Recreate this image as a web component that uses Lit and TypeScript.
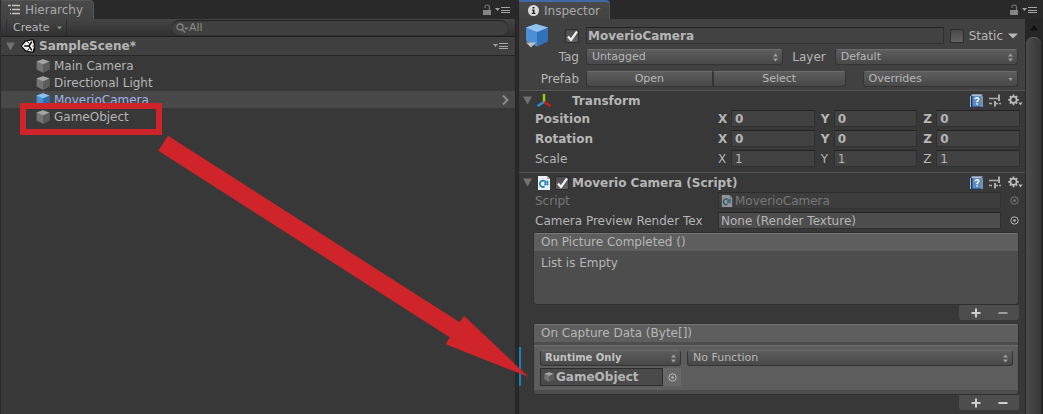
import { LitElement, html, svg, css, nothing } from "lit";
import { customElement, property } from "lit/decorators.js";

const base = css`
  * { box-sizing: border-box; }
  button, input, select {
    font: inherit; color: inherit; margin: 0; padding: 0; border: 0;
    background: none; border-radius: 0; appearance: none; outline: none; min-width: 0;
  }
  button, a { text-align: left; white-space: nowrap; }
  h2, h3, ul, p { margin: 0; padding: 0; font-size: inherit; font-weight: inherit; list-style: none; }
  svg { display: block; flex: none; }
  .tabs { display: flex; align-items: center; height: 19px; background: #292929; padding-right: 4px; }
  .tab {
    display: flex; align-items: center; gap: 4px; height: 19px; padding: 0 10px 0 7px;
    background: linear-gradient(#4a4a4a, #424242); border-right: 1px solid #555;
    border-top: 1px solid #555; border-top-right-radius: 4px; color: #a9a9a9;
  }
  .spacer { flex: 1; }
  .lock, .menu { display: flex; align-items: center; }
  .lock { margin-right: 3px; }
`;

const lockIcon = svg`<svg width="10" height="12" viewBox="0 0 10 12"><path d="M1 6h8v5H1z" fill="#858585"/><path d="M3 4V3.2a2 2 0 0 1 4.4 0V6" fill="none" stroke="#757575" stroke-width="1.2"/></svg>`;
const menuIcon = svg`<svg width="16" height="8" viewBox="0 0 16 8"><path d="M0 2h5L2.500 5z" fill="#a0a0a0"/><path d="M6 1.500h9M6 4.500h9M6 6.500h9" stroke="#a6a6a6" stroke-width="1.200"/></svg>`;
const foldIcon = svg`<svg width="9" height="9" viewBox="0 0 9 9"><path d="M0 0.500h9L4.500 8.500z" fill="#717171"/></svg>`;

const cube = (size: number, blue = false) => {
  const c = blue ? ["#8cc0ec", "#4b8fd0", "#2f6cae"] : ["#a4a4a4", "#747474", "#5c5c5c"];
  return svg`<svg width=${size} height=${size} viewBox="0 0 14 14">
    <path d="M7 0.300 13.400 2.600V10.400L7 13.700 0.600 10.400V2.600z" fill=${c[1]}/>
    <path d="M7 5.200 13.400 2.600V10.400L7 13.700z" fill=${c[2]}/>
    <path d="M7 0.300 13.400 2.600 7 5.200 0.600 2.600z" fill=${c[0]}/></svg>`;
};
const scriptIcon = (size: number) => svg`<svg width=${size} height=${size} viewBox="0 0 14 14">
  <path d="M1 0h9l3 3v11H1z" fill="#e9eef0"/><path d="M10 0v3h3z" fill="#a8b4ba"/>
  <path d="M7.600 5A3.200 3.200 0 1 0 7.600 10.600" fill="none" stroke="#1b7eae" stroke-width="1.700"/>
  <path d="M8.300 4.500v5M10.300 4.500v5M7 6h4.600M7 8.200h4.600" stroke="#1b7eae" stroke-width="1"/></svg>`;
const pickIcon = svg`<svg width="9" height="9" viewBox="0 0 9 9"><circle cx="4.500" cy="4.500" r="3.700" fill="none" stroke="currentColor"/><circle cx="4.500" cy="4.500" r="1.300" fill="currentColor"/></svg>`;

@customElement("hierarchy-panel")
export class HierarchyPanel extends LitElement {
  static styles = [base, css`
    :host { display: flex; flex-direction: column; background: #383838; border-right: 1px solid #232323; min-width: 0; }
    .toolbar {
      display: flex; align-items: center; height: 18px; padding-right: 7px;
      background: linear-gradient(#454545, #303030); border-bottom: 1px solid #202020;
    }
    .create {
      display: flex; align-items: center; gap: 7px; height: 17px; margin-left: 5px; padding: 0 3px 0 6px;
      border: solid #2c2c2c; border-width: 0 1px; font-size: 11px;
    }
    .search {
      display: flex; align-items: center; flex: 1; max-width: 336px; height: 15px; margin-left: auto;
      padding-left: 4px; border-radius: 8px; background: #404040; border-top: 1px solid #202020; color: #8b8b8b;
    }
    .search input { flex: 1; font-size: 11px; height: 13px; }
    .search input::placeholder { color: #8b8b8b; opacity: 1; }
    .tab { padding-left: 6px; }
    .scene {
      display: flex; align-items: center; height: 19px; padding: 0 6px 0 5px;
      background: #404040; border-bottom: 1px solid #262626; font-weight: bold;
    }
    .scene .name { margin-left: 4px; flex: 1; }
    .scene .logo { margin-left: 6px; }
    .items { padding-top: 1px; }
    .item { display: flex; align-items: center; gap: 4px; width: 100%; height: 17px; padding: 0 6px 0 35px; }
    .item span { flex: 1; }
    .on { background: #484848; color: #9fb3ea; }
  `];

  private items = ["Main Camera", "Directional Light", "MoverioCamera", "GameObject"];

  render() {
    return html`
      <div class="tabs">
        <button class="tab">
          <svg width="14" height="12" viewBox="0 0 14 12"><path d="M1 1.500h3M5 1.500h8M5 5.500h8M5 9.500h8M3 5.500h1M3 9.500h1" stroke="#c4c4c4" stroke-width="1.400"/></svg>
          Hierarchy
        </button>
        <span class="spacer"></span>
        <button class="lock" aria-label="Lock">${lockIcon}</button>
        <button class="menu" aria-label="Panel menu">${menuIcon}</button>
      </div>
      <div class="toolbar">
        <button class="create">Create
          <svg width="6" height="4" viewBox="0 0 6 4"><path d="M0 0.500h5L2.500 3.500z" fill="#909090"/></svg>
        </button>
        <label class="search">
          <svg width="13" height="11" viewBox="0 0 13 11"><circle cx="4" cy="4" r="3" fill="none" stroke="#858585" stroke-width="1.300"/><path d="M6 6l3 3.500" stroke="#858585" stroke-width="1.400"/><path d="M8 4.500h4.500L10.200 7z" fill="#858585"/></svg>
          <input type="text" placeholder="All" aria-label="Search hierarchy">
        </label>
      </div>
      <h2 class="scene">
        ${foldIcon}
        <svg class="logo" width="14" height="14" viewBox="0 0 14 14"><path d="M0 7 4 1.500 12 0 14 2V12L12 14 4 12.500z" fill="#0c0c0c"/><path d="M1 7 4.800 2.800 11.500 1.200 13.200 7 11.500 12.800 4.800 11.200z" fill="#f4f4f4"/><path d="M3.200 7H8M8 7 10.800 2.600M8 7l2.800 4.400" stroke="#0c0c0c" stroke-width="1.500"/><path d="M6.500 2.500 8 4.500M6.500 11.500 8 9.500M13.500 7H11.500" stroke="#0c0c0c" stroke-width="1"/></svg>
        <span class="name">SampleScene*</span>
        <button class="menu" aria-label="Scene menu">${menuIcon}</button>
      </h2>
      <ul class="items">
        ${this.items.map((name) => {
          const on = name === "MoverioCamera";
          return html`<li><button class="item ${on ? "on" : ""}">${cube(14, on)}<span>${name}</span>
            ${on ? html`<svg width="7" height="10" viewBox="0 0 7 10"><path d="M1 0.500 5.500 5 1 9.500" fill="none" stroke="#909090" stroke-width="1.800"/></svg>` : nothing}
          </button></li>`;
        })}
      </ul>`;
  }
}

@customElement("drop-down")
export class DropDown extends LitElement {
  @property() value = "";
  @property() label = "";
  @property({ type: Boolean }) single = false;
  @property({ type: Boolean }) strong = false;
  static styles = [base, css`
    :host { display: block; position: relative; min-width: 0; }
    select {
      display: block; width: 100%; height: 16px; padding: 0 14px 0 5px; font-size: 11px; line-height: 14px;
      color: #b8b8b8; border: 1px solid #343434; border-top-color: #6c6c6c; border-radius: 3px;
      background: linear-gradient(#5d5d5d, #484848);
    }
    .strong { font-weight: bold; font-size: 10px; color: #c4c4c4; padding-left: 4px; }
    .mark { position: absolute; right: 5px; top: 4px; pointer-events: none; }
  `];
  render() {
    return html`
      <select class=${this.strong ? "strong" : ""} aria-label=${this.label}><option>${this.value}</option></select>
      <svg class="mark" width="5" height="9" viewBox="0 0 5 9">
        ${this.single ? svg`<path d="M0.500 3h4L2.500 6z" fill="#a0a0a0"/>` : svg`<path d="M0 3.500h5L2.500 0.500zM0 5.500h5L2.500 8.500z" fill="#a0a0a0"/>`}
      </svg>`;
  }
}

@customElement("event-list")
export class EventList extends LitElement {
  @property() heading = "";
  @property({ type: Boolean }) filled = false;
  static styles = [base, css`
    :host { display: block; }
    .box { background: #4d4d4d; border: 1px solid #303030; border-radius: 3px; overflow: hidden; }
    .head { height: 18px; line-height: 17px; padding-left: 7px; background: #5e5e5e; border-top: 1px solid #747474; }
    .empty { height: 53px; padding: 4px 7px; line-height: 16px; }
    .entry {
      display: grid; grid-template-columns: 141px minmax(0, 1fr); gap: 2px 6px; margin: 3px 0 4px;
      height: 45px; padding: 4px 5px 0 6px; background: #5d5d5d; border-top: 1px solid #6c6c6c; align-content: start;
    }
    .object { display: flex; height: 18px; background: #686868; }
    .value {
      display: flex; align-items: center; gap: 2px; flex: 1; padding-left: 3px; font-weight: bold;
      background: #4a4a4a; border: 1px solid #2d2d2d;
    }
    .pick { display: grid; place-items: center; width: 18px; }
    .foot {
      display: flex; align-items: center; justify-content: space-around; width: 60px; height: 15px; margin-left: auto;
      padding: 0 3px; background: #4d4d4d; border-radius: 0 0 3px 3px;
    }
    .dim { opacity: 0.6; }
  `];
  render() {
    return html`
      <div class="box">
        <h3 class="head">${this.heading}</h3>
        ${this.filled
          ? html`<div class="entry">
              <drop-down strong value="Runtime Only" label="Call state"></drop-down>
              <drop-down value="No Function" label="Function"></drop-down>
              <div class="object"><button class="value">${cube(10)}GameObject</button>
                <button class="pick" aria-label="Select object">${pickIcon}</button></div>
            </div>`
          : html`<p class="empty">List is Empty</p>`}
      </div>
      <div class="foot">
        <button aria-label="Add"><svg width="10" height="10" viewBox="0 0 10 10"><path d="M5 0.500v9M0.500 5h9" stroke="#d0d0d0" stroke-width="2"/></svg></button>
        <button class=${this.filled ? "" : "dim"} aria-label="Remove"><svg width="10" height="10" viewBox="0 0 10 10"><path d="M0.500 5h9" stroke="#d0d0d0" stroke-width="2"/></svg></button>
      </div>`;
  }
}

@customElement("inspector-panel")
export class InspectorPanel extends LitElement {
  static styles = [base, css`
    :host { display: flex; flex-direction: column; background: #383838; border-left: 1px solid #232323; min-width: 0; }
    .tab { padding: 0 9px; border-top: 2px solid #4169a8; gap: 5px; }
    .tabs { padding-right: 5px; }
    .body { display: flex; flex: 1; }
    .content { flex: 1; min-width: 0; }
    .scroll { display: flex; flex-direction: column; width: 18px; padding: 0 2px 0 1px; background: #262626; }
    .up { display: grid; place-items: center; height: 18px; }
    .thumb { flex: 1; border-radius: 7px 7px 0 0; background: linear-gradient(90deg, #4c4c4c, #363636); border-top: 1px solid #606060; }
    .object { display: grid; grid-template-columns: 54px minmax(0, 1fr); column-gap: 7px; padding: 8px 7px 4px 6px; background: #414141; height: 71px; }
    .who { display: flex; justify-content: space-between; align-items: center; }
    .fields, .caption { display: grid; grid-template-rows: 17px 16px 17px; row-gap: 5px; align-content: start; min-width: 0; }
    .caption { align-items: center; text-align: right; }
    .line { display: flex; align-items: center; min-width: 0; }
    .text { height: 17px; padding: 0 3px; background: #424242; border: 1px solid #303030; border-top-color: #222; width: 100%; }
    .title { font-weight: bold; flex: 1; width: 0; padding: 0 1px; }
    .tick {
      width: 14px; height: 14px; border: 1px solid #2c2c2c; border-radius: 2px; flex: none;
      background: linear-gradient(#4a4a4a, #626262);
    }
    .tick:checked {
      background: url("data:image/svg+xml,%3Csvg xmlns='http://www.w3.org/2000/svg' viewBox='0 0 12 12'%3E%3Cpath d='M2 6.500l3 3.500L11 1.500' fill='none' stroke='%23f2f2f2' stroke-width='2.200'/%3E%3C/svg%3E"), linear-gradient(#4a4a4a, #626262);
    }
    .static { display: flex; align-items: center; gap: 5px; margin-left: 6px; }
    .tag { flex: 197; }
    .layer { flex: 183; }
    .between { margin: 0 9px; }
    .push {
      height: 16px; text-align: center; font-size: 11px; line-height: 14px; color: #b8b8b8;
      border: 1px solid #343434; border-top-color: #6c6c6c; background: linear-gradient(#5d5d5d, #484848);
    }
    .open { flex: 126; border-radius: 3px 0 0 3px; }
    .select { flex: 132; border-radius: 0 3px 3px 0; }
    .over { flex: 157; margin-left: 17px; }
    .bar { display: flex; align-items: center; height: 20px; padding: 0 2px 0 4px; border-top: 1px solid #545454; font-weight: bold; }
    .bar .icon { margin: 0 4px 0 5px; }
    .bar h2 { flex: 1; }
    .bar .wide { padding-left: 17px; }
    .bar .near { padding-left: 3px; }
    .tools { display: flex; align-items: center; gap: 6px; }
    .rows { display: grid; row-gap: 3px; padding-left: 16px; }
    .row { display: grid; grid-template-columns: 183px minmax(0, 1fr); align-items: center; height: 17px; }
    .label { white-space: nowrap; }
    .vector { display: grid; grid-template-columns: repeat(3, minmax(0, 1fr)); column-gap: 6px; padding-right: 5px; }
    .axis { display: grid; grid-template-columns: 13px minmax(0, 1fr); align-items: center; }
    .strong { font-weight: bold; }
    .transform { padding-bottom: 5px; }
    .ref { display: grid; grid-template-columns: minmax(0, 1fr) 24px; align-items: center; }
    .slot { display: flex; align-items: center; gap: 2px; height: 17px; padding-left: 2px; background: #424242; border: 1px solid #303030; border-top-color: #222; white-space: nowrap; }
    .lit { background: #4d4d4d; }
    .pick { display: grid; place-items: center; padding-left: 2px; }
    .off { opacity: 0.5; }
    .events { display: grid; row-gap: 3px; padding: 3px 6px 0 14px; }
    .changed { margin-left: -14px; padding-left: 14px; background: linear-gradient(#1683bf, #1683bf) 0 24px / 2px 39px no-repeat; }
  `];

  private vectors = [
    { name: "Position", value: "0", strong: true },
    { name: "Rotation", value: "0", strong: true },
    { name: "Scale", value: "1", strong: false },
  ];

  private tools() {
    return html`<div class="tools">
      <button aria-label="Help"><svg width="14" height="14" viewBox="0 0 14 14"><path d="M0.500 1.500 3 0.500h10.500v12L11.500 13.500H0.500z" fill="#1f3b66"/><path d="M1.500 2v11" stroke="#9fb8d6" stroke-width="1"/><path d="M2.500 0.500h11v1.200h-11zM12.500 1v12h1V1z" fill="#e4ecf5"/><path d="M3.500 2h9v10.500h-9z" fill="#5f8bc0"/><path d="M6.200 5.300Q6.200 3.800 8 3.800T9.800 5.300Q9.800 6.300 8 7.300V8.300M8 9.300v1.500" fill="none" stroke="#fff" stroke-width="1.400"/></svg></button>
      <button aria-label="Presets"><svg width="13" height="13" viewBox="0 0 13 13"><path d="M0 4.500h7M7 4.500h2M0 9.500h3M5 9.500h4M10 9.500h2" stroke="#ababab" stroke-width="1.500"/><path d="M10 0.500v6.500M6 7v5.500" stroke="#ababab" stroke-width="2"/></svg></button>
      <button aria-label="Settings"><svg width="15" height="13" viewBox="0 0 15 13"><circle cx="5.500" cy="5.800" r="3.100" fill="none" stroke="#bdbdbd" stroke-width="1.700"/><path d="M5.500 0.500v2M5.500 9v2.200M0.200 5.800h2M8.800 5.800h2M1.800 2.100l1.400 1.400M7.800 8.100l1.400 1.400M9.200 2.100 7.800 3.500M3.200 8.100 1.800 9.500" stroke="#bdbdbd" stroke-width="1.700"/><path d="M10.500 8.500h4L12.500 11.500z" fill="#bdbdbd"/></svg></button>
    </div>`;
  }

  render() {
    return html`
      <div class="tabs">
        <button class="tab">
          <svg width="11" height="11" viewBox="0 0 11 11"><circle cx="5.500" cy="5.500" r="5.500" fill="#dcdcdc"/><path d="M4.500 2h2v1.600h-2zM4 4.500h2.500V8H7.500v1H3.800V8h1V5.500H4z" fill="#222"/></svg>
          Inspector
        </button>
        <span class="spacer"></span>
        <button class="lock" aria-label="Lock">${lockIcon}</button>
        <button class="menu" aria-label="Panel menu">${menuIcon}</button>
      </div>
      <div class="body">
        <div class="content">
          <div class="object">
            <div class="caption">
              <div class="who">
                <button aria-label="Icon"><svg width="24" height="24" viewBox="0 0 24 24"><path d="M11 0 23 3.500V17L12 22.500 1 17V3.500z" fill="#4c8fd2"/><path d="M12 8 23 3.500V17L12 22.500z" fill="#3272b8"/><path d="M11 0 23 3.500 12 8 1 3.500z" fill="#92c3ee"/><path d="M1 18.500h10L6 23.500z" fill="#c0c0c0"/></svg></button>
                <input class="tick" type="checkbox" checked aria-label="Active">
              </div>
              <span>Tag</span>
              <span>Prefab</span>
            </div>
            <div class="fields">
              <div class="line">
                <input class="text title" value="MoverioCamera" aria-label="Name">
                <label class="static"><input class="tick" type="checkbox">Static
                  <svg width="10" height="6" viewBox="0 0 10 6"><path d="M0 0.500h10L5 5.500z" fill="#b8b8b8"/></svg></label>
              </div>
              <div class="line">
                <drop-down class="tag" value="Untagged" label="Tag"></drop-down>
                <span class="between">Layer</span>
                <drop-down class="layer" value="Default" label="Layer"></drop-down>
              </div>
              <div class="line">
                <button class="push open">Open</button><button class="push select">Select</button>
                <drop-down class="over" single value="Overrides" label="Overrides"></drop-down>
              </div>
            </div>
          </div>
          <section class="transform">
            <div class="bar">
              ${foldIcon}
              <svg class="icon" width="14" height="14" viewBox="0 0 14 14"><path d="M7 0v8" stroke="#9bd000" stroke-width="2.400"/><path d="M7 8 0.500 12" stroke="#2793d8" stroke-width="2.400"/><path d="M7 8l6.500 4" stroke="#d21f10" stroke-width="2.400"/></svg>
              <h2 class="wide">Transform</h2>
              ${this.tools()}
            </div>
            <div class="rows">
              ${this.vectors.map((v) => html`
                <div class="row ${v.strong ? "strong" : ""}">
                  <span class="label">${v.name}</span>
                  <div class="vector">
                    ${["X", "Y", "Z"].map((a) => html`<label class="axis">${a}<input class="text" value=${v.value}></label>`)}
                  </div>
                </div>`)}
            </div>
          </section>
          <section>
            <div class="bar">
              ${foldIcon}
              <span class="icon">${scriptIcon(14)}</span>
              <input class="tick" type="checkbox" checked id="enabled">
              <h2 class="near"><label for="enabled">Moverio Camera (Script)</label></h2>
              ${this.tools()}
            </div>
            <div class="rows">
              <div class="row off"><span class="label">Script</span>
                <div class="ref"><span class="slot">${scriptIcon(12)}MoverioCamera</span><button class="pick" aria-label="Select script">${pickIcon}</button></div></div>
              <div class="row"><span class="label">Camera Preview Render Tex</span>
                <div class="ref"><span class="slot lit">None (Render Texture)</span><button class="pick" aria-label="Select texture">${pickIcon}</button></div></div>
            </div>
            <div class="events">
              <event-list heading="On Picture Completed ()"></event-list>
              <event-list class="changed" filled heading="On Capture Data (Byte[])"></event-list>
            </div>
          </section>
        </div>
        <div class="scroll">
          <button class="up" aria-label="Scroll up"><svg width="8" height="6" viewBox="0 0 8 6"><path d="M0 5.500h8L4 0z" fill="#111"/></svg></button>
          <div class="thumb"></div>
        </div>
      </div>`;
  }
}

@customElement("app-root")
export class AppRoot extends LitElement {
  static styles = css`
    :host {
      display: grid; grid-template-columns: minmax(0, 515fr) minmax(0, 525fr); column-gap: 2px; position: relative;
      min-height: 100vh; padding-left: 1px; background: #2b2b2b; overflow: hidden; box-sizing: border-box;
      font: 12px/16px "DejaVu Sans", Verdana, sans-serif; color: #b6b6b6;
    }
    .frame { position: absolute; left: 20px; top: 103px; width: 142px; height: 32px; box-sizing: border-box; border: 6px solid #cf242a; pointer-events: none; }
    .arrow { position: absolute; left: 0; top: 0; pointer-events: none; }
  `;
  render() {
    return html`
      <hierarchy-panel></hierarchy-panel>
      <inspector-panel></inspector-panel>
      <div class="frame"></div>
      <svg class="arrow" width="540" height="390" viewBox="0 0 540 390">
        <polygon points="168,135.700 158.300,150.700 449.700,337.300 445.700,344.300 528.700,377 464,315.700 459.700,322.300" fill="#cf242a"/>
      </svg>`;
  }
}
